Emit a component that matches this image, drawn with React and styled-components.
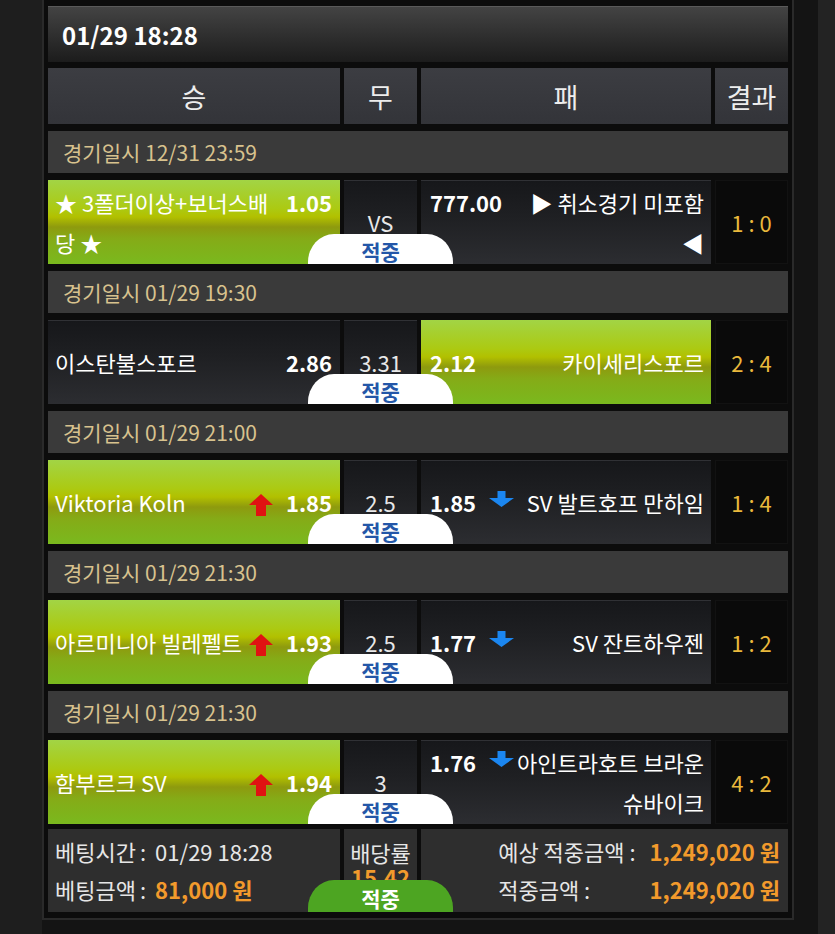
import React from 'react';
import styled, { createGlobalStyle, css } from 'styled-components';

const GlobalStyle = createGlobalStyle`
  html, body { margin: 0; padding: 0; background: #141414; }
  body { font-family: "Noto Sans CJK KR", "Noto Sans", sans-serif; color: #fff; }
  * { box-sizing: border-box; }
`;

const Page = styled.div`
  min-height: 934px;
  padding-left: 42px;
  background: linear-gradient(to right, #1e1e1e 0 42px, #141414 42px 818px, #232323 818px);
`;

const Board = styled.div`
  width: 752px;
  background: #0c0c0c;
  border: 2px solid #2a2a2a;
  border-top: none;
  padding: 6px 4px 6px;
  display: flex;
  flex-direction: column;
  gap: 7px;
`;

const TopBar = styled.div`
  height: 56px;
  margin-bottom: -1px;
  background: linear-gradient(#444444, #1c1c1c);
  box-shadow: inset 0 1px 0 #5a5a5a;
  display: flex;
  align-items: center;
  padding-left: 14px;
  font-size: 24px;
  font-weight: 700;
  color: #fff;
`;

const Row = styled.div`
  position: relative;
  display: grid;
  grid-template-columns: ${p => p.$cols || '292px 73px 290px 73px'};
  column-gap: 4px;
  height: ${p => p.$h}px;
  margin-top: ${p => p.$mt || 0}px;
`;

const HeadCell = styled.div`
  background: linear-gradient(#3c3d42, #333439);
  display: flex;
  align-items: center;
  justify-content: center;
  font-size: 27px;
  color: #ededed;
  white-space: nowrap;
`;

const DateBar = styled.div`
  height: 42px;
  background: #3a3a3a;
  display: flex;
  align-items: center;
  padding-left: 15px;
  font-size: 21px;
  color: #d8c28e;
`;

const greenBg = css`
  background: linear-gradient(
    to bottom,
    #a2d445 0%,
    #acca12 34%,
    #b2c000 44%,
    #8e9a0e 56%,
    #85ab17 70%,
    #7ab91e 100%
  );
`;

const darkBg = css`
  background: linear-gradient(to bottom, #16171a 0%, #1f2023 45%, #2c2d31 100%);
  box-shadow: inset 0 1px 0 #303135;
`;

const TeamCell = styled.div`
  ${p => (p.$win ? greenBg : darkBg)};
  display: flex;
  align-items: center;
  padding: 0 ${p => (p.$side === 'home' ? '8px 0 7px' : '7px 0 9px')};
  color: #fff;
`;

const TeamInner = styled.div`
  width: 100%;
  display: grid;
  grid-template-columns: ${p => (p.$side === 'home' ? 'minmax(0, 1fr) auto' : 'auto minmax(0, 1fr)')};
  align-items: start;
  line-height: 40px;
`;

const Name = styled.div`
  font-size: 22px;
  white-space: nowrap;
  text-align: ${p => (p.$side === 'home' ? 'left' : 'right')};
  order: ${p => (p.$side === 'home' ? 0 : 1)};
`;

const Odds = styled.div`
  display: flex;
  align-items: center;
  gap: 13px;
  height: 40px;
  font-size: 22px;
  font-weight: 700;
  margin: ${p => (p.$side === 'home' ? '0 0 0 4px' : '0')};
`;

const DrawCell = styled.div`
  ${darkBg};
  display: flex;
  align-items: center;
  justify-content: center;
  font-size: 22px;
  color: #e8e8e8;
`;

const ScoreCell = styled.div`
  background: #0a0a0a;
  box-shadow: inset 0 0 0 1px #121212;
  display: flex;
  align-items: center;
  justify-content: center;
  font-size: 22px;
  color: #e9b83c;
`;

const Badge = styled.div`
  position: absolute;
  left: 260px;
  bottom: 0;
  width: 145px;
  height: ${p => (p.$green ? 32 : 30)}px;
  border-radius: 26px 26px 0 0 / 28px 28px 0 0;
  background: ${p => (p.$green ? '#4da522' : '#ffffff')};
  color: ${p => (p.$green ? '#ffffff' : '#2457a8')};
  font-size: 21px;
  font-weight: 700;
  display: flex;
  align-items: center;
  justify-content: center;
  padding-top: 3px;
`;

const Arrow = styled.svg`
  display: block;
  flex: none;
  transform: translateY(${p => p.$dy}px);
`;

const UpArrow = () => (
  <Arrow width="24" height="22" viewBox="0 0 24 22" $dy={3}>
    <polygon points="12,0 24,11 17,11 17,22 7,22 7,11 0,11" fill="#e01212" />
  </Arrow>
);

const DownArrow = () => (
  <Arrow width="25" height="16" viewBox="0 0 25 16" $dy={-3}>
    <polygon points="8.5,0 16.5,0 16.5,7 25,7 12.5,16 0,7 8.5,7" fill="#1b86f0" />
  </Arrow>
);

const SumCell = styled.div`
  background: #2e2e2e;
  color: #e6e6e6;
  font-size: 22px;
`;

const SumLeft = styled(SumCell)`
  padding: 3px 0 0 7px;
  line-height: 38px;
  white-space: nowrap;
`;

const Colon = styled.span`
  margin: 0 9px 0 4px;
`;

const SumMid = styled(SumCell)`
  padding-top: 11px;
  line-height: 24px;
  text-align: center;
`;

const SumRight = styled(SumCell)`
  display: grid;
  grid-template-columns: auto auto;
  justify-content: end;
  align-content: start;
  column-gap: 14px;
  padding: 3px 8px 0 0;
  line-height: 38px;
  white-space: nowrap;
`;

const Money = styled.span`
  display: ${p => (p.$block ? 'block' : 'inline')};
  color: #f29a2c;
  font-weight: 700;
  text-align: ${p => (p.$block ? 'center' : 'right')};
`;

const matches = [
  {
    date: '경기일시 12/31 23:59',
    home: { name: ['★ 3폴더이상+보너스배', '당 ★'], odds: '1.05', win: true },
    draw: 'VS',
    away: { name: ['▶ 취소경기 미포함', '◀'], odds: '777.00' },
    score: '1 : 0',
  },
  {
    date: '경기일시 01/29 19:30',
    home: { name: ['이스탄불스포르'], odds: '2.86' },
    draw: '3.31',
    away: { name: ['카이세리스포르'], odds: '2.12', win: true },
    score: '2 : 4',
  },
  {
    date: '경기일시 01/29 21:00',
    home: { name: ['Viktoria Koln'], odds: '1.85', win: true, arrow: true },
    draw: '2.5',
    away: { name: ['SV 발트호프 만하임'], odds: '1.85', arrow: true },
    score: '1 : 4',
  },
  {
    date: '경기일시 01/29 21:30',
    home: { name: ['아르미니아 빌레펠트'], odds: '1.93', win: true, arrow: true },
    draw: '2.5',
    away: { name: ['SV 잔트하우젠'], odds: '1.77', arrow: true },
    score: '1 : 2',
  },
  {
    date: '경기일시 01/29 21:30',
    home: { name: ['함부르크 SV'], odds: '1.94', win: true, arrow: true },
    draw: '3',
    away: { name: ['아인트라호트 브라운', '슈바이크'], odds: '1.76', arrow: true },
    score: '4 : 2',
  },
];

const Team = ({ side, team }) => (
  <TeamCell $side={side} $win={team.win}>
    <TeamInner $side={side}>
      <Name $side={side}>
        {team.name.map((l, i) => (
          <div key={i}>{l}</div>
        ))}
      </Name>
      <Odds $side={side}>
        {side === 'home' && team.arrow && <UpArrow />}
        <span>{team.odds}</span>
        {side === 'away' && team.arrow && <DownArrow />}
      </Odds>
    </TeamInner>
  </TeamCell>
);

export default function App() {
  return (
    <>
      <GlobalStyle />
      <Page>
        <Board>
          <TopBar>01/29 18:28</TopBar>
          <Row $h={56}>
            <HeadCell>승</HeadCell>
            <HeadCell>무</HeadCell>
            <HeadCell>패</HeadCell>
            <HeadCell>결과</HeadCell>
          </Row>
          {matches.map((m, i) => (
            <React.Fragment key={i}>
              <DateBar>{m.date}</DateBar>
              <Row $h={84}>
                <Team side="home" team={m.home} />
                <DrawCell>{m.draw}</DrawCell>
                <Team side="away" team={m.away} />
                <ScoreCell>{m.score}</ScoreCell>
                <Badge>적중</Badge>
              </Row>
            </React.Fragment>
          ))}
          <Row $h={83} $cols="292px 73px 367px" $mt={-2}>
            <SumLeft>
              <div>
                베팅시간<Colon>:</Colon>01/29 18:28
              </div>
              <div>
                베팅금액<Colon>:</Colon><Money>81,000 원</Money>
              </div>
            </SumLeft>
            <SumMid>
              <div>배당률</div>
              <Money $block>15.42</Money>
            </SumMid>
            <SumRight>
              <span>예상 적중금액 :</span>
              <Money>1,249,020 원</Money>
              <span>적중금액 :</span>
              <Money>1,249,020 원</Money>
            </SumRight>
            <Badge $green>적중</Badge>
          </Row>
        </Board>
      </Page>
    </>
  );
}
